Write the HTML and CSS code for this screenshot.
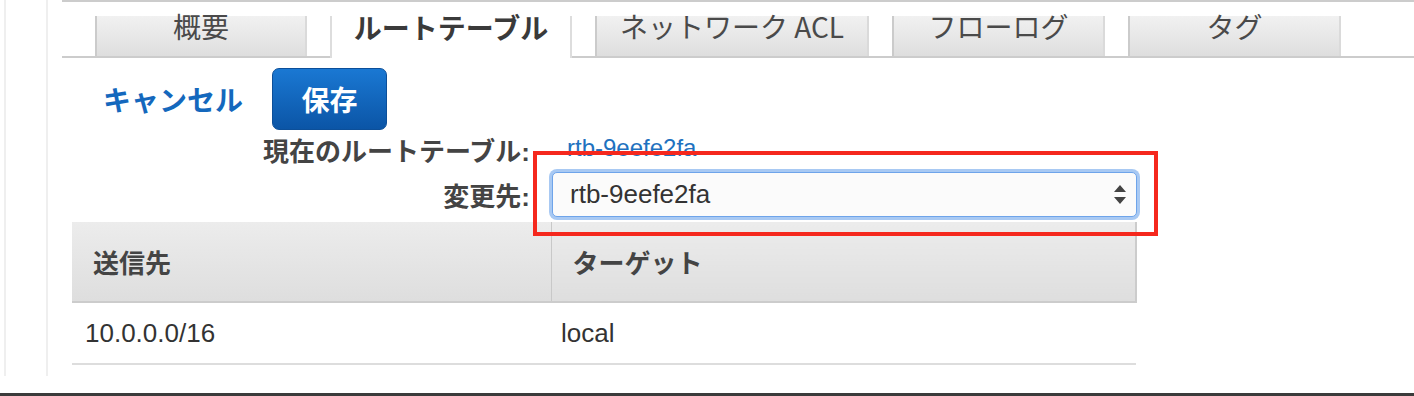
FILE: index.html
```html
<!DOCTYPE html>
<html lang="ja">
<head>
<meta charset="utf-8">
<title>ルートテーブル</title>
<link rel="stylesheet" href="styles.css">
</head>
<body>
<div class="page">
  <div class="rail"><span class="rail-line"></span><span class="rail-line"></span></div>
  <main class="main">
    <nav class="tabs">
      <div class="tab w1"><span>概要</span></div>
      <div class="tab active w2"><span>ルートテーブル</span></div>
      <div class="tab w3"><span>ネットワーク ACL</span></div>
      <div class="tab w4"><span>フローログ</span></div>
      <div class="tab w4"><span>タグ</span></div>
    </nav>
    <div class="actions">
      <a class="cancel" href="#">キャンセル</a>
      <button class="save" type="button">保存</button>
    </div>
    <div class="form">
      <div class="frow r1">
        <span class="flabel">現在のルートテーブル:</span>
        <a class="fval" href="#">rtb-9eefe2fa</a>
      </div>
      <div class="frow r2">
        <span class="flabel">変更先:</span>
        <div class="select">
          <span>rtb-9eefe2fa</span>
          <svg class="arrows" width="12" height="20" viewBox="0 0 12 20"><path d="M6 0 L12 7 L0 7 Z M0 12 L12 12 L6 19 Z" fill="#444"/></svg>
        </div>
      </div>
      <div class="highlight"></div>
    </div>
    <table class="routes">
      <thead>
        <tr><th class="c1">送信先</th><th class="c2">ターゲット</th></tr>
      </thead>
      <tbody>
        <tr><td class="c1">10.0.0.0/16</td><td class="c2">local</td></tr>
      </tbody>
    </table>
  </main>
</div>
<div class="bottombar"></div>
</body>
</html>
```

FILE: styles.css
```css
html, body {
  margin: 0;
  padding: 0;
  background: #fff;
}
body {
  width: 1414px;
  height: 396px;
  overflow: hidden;
  font-family: "Liberation Sans", "Noto Sans CJK JP", sans-serif;
  color: #333;
}
.page {
  display: flex;
  height: 376px;
}
.rail {
  display: flex;
  width: 48px;
  padding-left: 4px;
  box-sizing: border-box;
  gap: 40px;
  flex: none;
}
.rail-line {
  width: 2px;
  height: 100%;
  background: #efefef;
}
.main {
  flex: 1;
  padding-left: 14px;
  overflow: hidden;
}
.tabs {
  display: flex;
  gap: 23px;
  align-items: flex-start;
  border-top: 2px solid #cccccc;
  border-bottom: 2px solid #cccccc;
  padding: 14px 0 0 33px;
  height: 40px;
}
.tab {
  box-sizing: border-box;
  height: 40px;
  text-align: center;
  background: linear-gradient(#f1f1f1, #dedede);
  border-left: 2px solid #cbcbcb;
  border-right: 2px solid #dadada;
  font-family: "Noto Sans CJK JP", sans-serif;
  font-weight: 400;
  font-size: 28px;
  line-height: 28px;
  color: #4a4a4a;
}
.tab span {
  display: block;
  margin-top: -4px;
}
.tab.active {
  background: #fff;
  height: 42px;
  position: relative;
  border-left: 2px solid #dddddd;
  border-right: 2px solid #dddddd;
  font-family: "Liberation Sans", "Noto Sans CJK JP", sans-serif;
  font-weight: bold;
  color: #3a3a3a;
}
.tab.active span {
  margin-top: 0;
}
.w1 { width: 212px; }
.w2 { width: 242px; }
.w3 { width: 274px; }
.w4 { width: 213px; }

.actions {
  display: flex;
  align-items: center;
  gap: 29px;
  margin-top: 10px;
  height: 62px;
  padding-left: 41px;
}
.cancel {
  color: #1468bd;
  font-weight: bold;
  font-size: 28px;
  text-decoration: none;
}
.save {
  width: 115px;
  height: 62px;
  border: 1px solid #0c4f99;
  border-radius: 7px;
  background: linear-gradient(#1a78d3, #0b55a6);
  color: #fff;
  font-family: "Liberation Sans", "Noto Sans CJK JP", sans-serif;
  font-weight: bold;
  font-size: 28px;
  padding: 0;
}

.form {
  position: relative;
}
.frow {
  display: flex;
  align-items: center;
}
.r1 { height: 39px; }
.r2 { height: 51px; }
.flabel {
  width: 468px;
  text-align: right;
  font-weight: bold;
  font-size: 26px;
  color: #444;
  flex: none;
}
.fval {
  margin-left: 37px;
  color: #1e72c0;
  font-size: 24px;
  text-decoration: none;
  margin-top: -4px;
}
.select {
  box-sizing: border-box;
  margin-left: 22px;
  width: 585px;
  height: 45px;
  border: 1px solid #6ea4ea;
  border-radius: 5px;
  box-shadow: 0 0 0 3px #a8c9f3;
  background: #fbfbfb;
  display: flex;
  align-items: center;
  justify-content: space-between;
  padding: 0 10px 0 17px;
  font-size: 26px;
  color: #333;
}
.arrows {
  display: block;
}
.highlight {
  position: absolute;
  left: 471px;
  top: 21px;
  width: 625px;
  height: 85px;
  box-sizing: border-box;
  border: 4px solid #f5281d;
  pointer-events: none;
}

.routes {
  margin: 2px 0 0 10px;
  width: 1065px;
  border-collapse: collapse;
  font-size: 26px;
}
.routes th {
  height: 80px;
  box-sizing: border-box;
  text-align: left;
  font-weight: bold;
  color: #444;
  background: linear-gradient(#ececec, #dedede);
  border-bottom: 2px solid #cccccc;
  padding: 0 0 0 21px;
}
.routes th.c1 {
  width: 479px;
  border-right: 1px solid #c8c8c8;
}
.routes th.c2 {
  border-left: 1px solid #f8f8f8;
  border-right: 2px solid #cccccc;
}
.routes td {
  height: 62px;
  box-sizing: border-box;
  border-bottom: 2px solid #dddddd;
  color: #333;
  padding: 0 0 0 13px;
}
.routes td.c2 {
  padding-left: 10px;
}
.bottombar {
  margin-top: 17px;
  height: 3px;
  background: #3b3b3b;
}
```
